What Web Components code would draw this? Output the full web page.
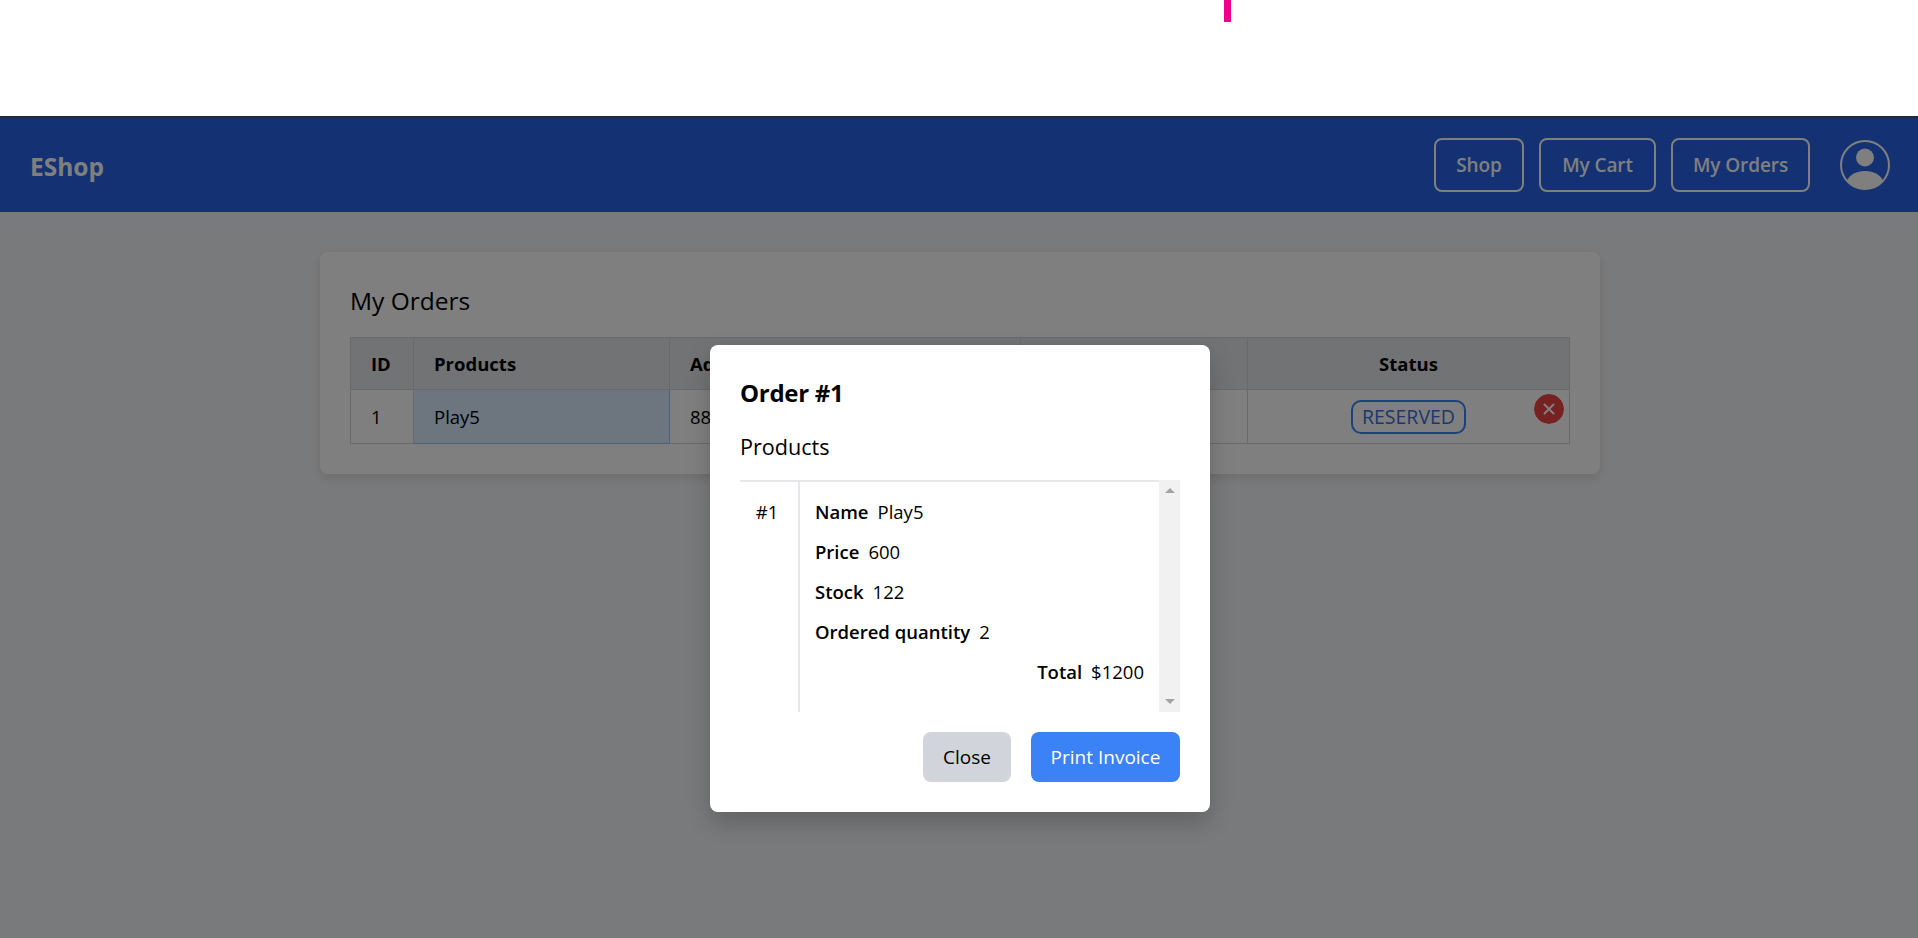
<!DOCTYPE html>
<html><head><meta charset="utf-8">
<style>
html,body{margin:0;padding:0;height:938px;overflow:hidden;background:#fff;font-family:"Open Sans","Noto Sans",sans-serif;color:#000}
</style></head><body>
<eshop-app></eshop-app>
<script>
const def=(n,html)=>customElements.define(n,class extends HTMLElement{constructor(){super();this.attachShadow({mode:'open'}).innerHTML=html}});
const F='"Open Sans","Noto Sans",sans-serif';
def('top-strip',`<style>:host{display:block;height:116px;background:#fff;box-sizing:border-box;padding-left:1224px}
i{display:block;width:7px;height:22px;background:#ec008c}</style><i></i>`);
def('nav-btn',`<style>:host{display:flex;align-items:center;justify-content:center;box-sizing:border-box;height:54px;padding-top:1px;border:2px solid #fff;border-radius:8px;color:#fff;font-size:19px;font-weight:600;letter-spacing:-.1px}</style><slot></slot>`);
def('nav-bar',`<style>:host{display:flex;align-items:center;height:95px;background:#2662e6;padding:0 28px 0 30px;font-family:${F};}
b{font-size:24.5px;font-weight:700;color:#fff;flex:1;padding-top:3px}
.g{display:flex;gap:15px;margin-right:30px}
svg{display:block;width:50px;height:50px}</style>
<b>EShop</b><div class="g"><nav-btn style="width:90px">Shop</nav-btn><nav-btn style="width:117px">My Cart</nav-btn><nav-btn style="width:139px">My Orders</nav-btn></div>
<svg viewBox="0 0 50 50"><defs><clipPath id="c"><circle cx="25" cy="25" r="24"/></clipPath></defs><circle cx="25" cy="25" r="24" fill="none" stroke="#fff" stroke-width="2"/><circle cx="25" cy="17.5" r="9" fill="#fff"/><ellipse cx="25" cy="45" rx="19" ry="14" fill="#fff" clip-path="url(#c)"/></svg>`);
def('order-table',`<style>:host{display:block;position:relative;font-size:18.5px}
table{border-collapse:collapse;width:1220px;table-layout:fixed}
th,td{border:1px solid #d1d5db;padding:0 20px;text-align:left;font-weight:400;white-space:nowrap;overflow:hidden}
th{background:#e5e7eb;font-weight:700;height:51px}
td{height:53px}
.sel{background:#dbeafe;border-color:#93c5fd}
.c{text-align:center}
.badge{display:inline-flex;align-items:center;justify-content:center;box-sizing:border-box;width:115px;height:34px;border:2px solid #3b82f6;border-radius:10px;color:#3b6fd8;font-size:19.5px;vertical-align:middle}
.x{position:absolute;left:1184px;top:57px;width:30px;height:30px;border-radius:50%;display:block}
</style>
<table><colgroup><col style="width:63px"><col style="width:256px"><col style="width:351px"><col style="width:227px"><col></colgroup>
<tr><th>ID</th><th>Products</th><th>Address</th><th></th><th class="c">Status</th></tr>
<tr><td>1</td><td class="sel">Play5</td><td>88</td><td></td><td class="c"><span class="badge">RESERVED</span></td></tr></table>
<svg class="x" viewBox="0 0 30 30"><circle cx="15" cy="15" r="15" fill="#ef4444"/><path d="M10.5 10.5l9 9M19.5 10.5l-9 9" stroke="#fff" stroke-width="2" stroke-linecap="round"/></svg>`);
def('orders-card',`<style>:host{display:block;box-sizing:border-box;width:1280px;height:222px;margin:40px auto 0;padding:30px;background:#fff;border-radius:8px;box-shadow:0 4px 10px rgba(0,0,0,.1)}
h2{margin:0 0 20px;height:35px;font-size:24.5px;line-height:37px;font-weight:400}</style>
<h2>My Orders</h2><slot></slot>`);
def('kv-row',`<style>:host{display:block;height:40px;line-height:40px;font-size:18.5px;white-space:nowrap}
b{font-weight:600;margin-right:9px}</style><b><slot name="k"></slot></b><slot></slot>`);
def('sb-track',`<style>:host{display:flex;flex-direction:column;justify-content:space-between;align-items:center;width:21px;background:#f1f1f1;box-sizing:border-box;padding:8px 0 8px}
i{display:block;width:0;height:0;border-left:5px solid transparent;border-right:5px solid transparent}
.u{border-bottom:5px solid #a3a3a3}.d{border-top:5px solid #a3a3a3}</style><i class="u"></i><i class="d"></i>`);
def('order-modal',`<style>:host{display:block;box-sizing:border-box;width:500px;height:467px;margin:226px auto 0;padding:30px;background:#fff;border-radius:8px;box-shadow:0 10px 25px rgba(0,0,0,.2);font-family:${F};}
h3{margin:1px 0 0;font-size:24px;font-weight:700;line-height:33px;height:33px;letter-spacing:-.3px}
h4{margin:22px 0 0;font-size:21.6px;font-weight:400;line-height:32px;height:49px;box-sizing:content-box}
.s{display:flex;height:232px;margin-top:0}
.m{flex:1;display:flex;border-top:2px solid #e5e7eb;font-size:18.5px}
.n{width:58px;padding:10px 4px 0 0;line-height:40px;text-align:center;box-sizing:border-box}
.d{border-left:2px solid #e5e7eb;flex:1;padding:10px 15px 0 15px}
.t{text-align:right}
.f{display:flex;justify-content:flex-end;gap:20px;margin-top:20px}
button{all:unset;display:flex;align-items:center;justify-content:center;height:50px;border-radius:8px;font-size:19px;box-sizing:border-box}
.a{width:88px;background:#d1d5db;color:#000}.b{width:149px;background:#3b82f6;color:#fff}
</style>
<h3>Order #1</h3><h4>Products</h4>
<div class="s"><div class="m"><div class="n">#1</div><div class="d">
<kv-row><span slot="k">Name</span>Play5</kv-row><kv-row><span slot="k">Price</span>600</kv-row><kv-row><span slot="k">Stock</span>122</kv-row><kv-row><span slot="k">Ordered quantity</span>2</kv-row><kv-row class="t"><span slot="k">Total</span>$1200</kv-row>
</div></div><sb-track></sb-track></div>
<div class="f"><button class="a">Close</button><button class="b">Print Invoice</button></div>`);
def('eshop-app',`<style>:host{display:block;position:relative;height:938px;font-family:${F}}
.pg{background:#f3f4f6;height:822px;padding:1px 0 0 2px;box-sizing:border-box}
nav-bar{margin-left:-2px}
.ov{position:absolute;left:0;right:0;top:116px;bottom:0;background:rgba(0,0,0,.5);border-top:2px solid #20283c;box-sizing:border-box;padding:1px 0 0 2px}
</style>
<top-strip></top-strip>
<div class="pg"><nav-bar></nav-bar><orders-card><order-table></order-table></orders-card></div>
<div class="ov"><order-modal></order-modal></div>`);
</script>
</body></html>
